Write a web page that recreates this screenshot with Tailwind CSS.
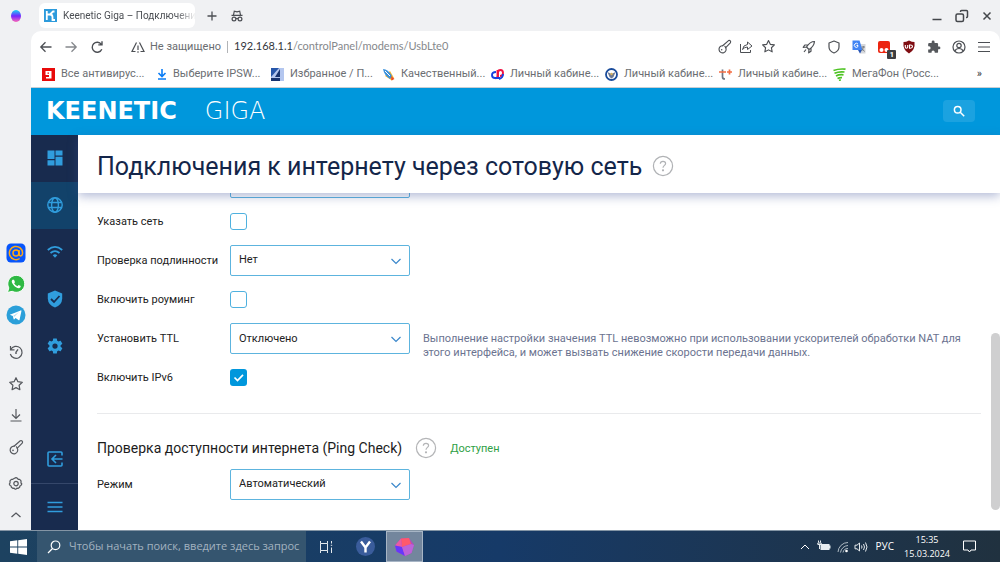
<!DOCTYPE html>
<html lang="ru">
<head>
<meta charset="utf-8">
<meta name="viewport" content="width=device-width, initial-scale=1">
<title>Keenetic Giga – Подключения к интернету через сотовую сеть</title>
<script src="https://cdn.jsdelivr.net/npm/@tailwindcss/browser@4"></script>
</head>
<body class="flex h-screen flex-col overflow-hidden bg-[#f0f1f3] font-['Roboto','Noto_Sans',sans-serif] text-[11px] text-[#222]">

<svg class="hidden" aria-hidden="true">
  <symbol id="key" viewBox="0 0 16 16" fill="none" stroke="currentColor" stroke-width="1.2" stroke-linejoin="round" stroke-linecap="round"><path d="M6 7.2 12.3 1.7Q13.4 1.2 14.2 2.1T14.2 4.2L9.3 9.2"/><path d="M6 7.2A3.8 3.8 0 1 0 9.3 9.2M9.3 9.2 8.4 7.8"/><circle cx="5" cy="11.4" r=".8" fill="currentColor" stroke="none"/></symbol>
  <symbol id="star" viewBox="0 0 16 16" fill="none" stroke="currentColor" stroke-width="1.2" stroke-linejoin="round"><path d="m8 1.7 1.9 4 4.4.6-3.2 3 .8 4.4L8 11.6l-3.9 2.1.8-4.4-3.2-3 4.4-.6z"/></symbol>
  <symbol id="chev" viewBox="0 0 12 12" fill="none" stroke="currentColor" stroke-width="1.2"><path d="m1.500 4 4.500 4.500L10.500 4"/></symbol>
  <symbol id="help" viewBox="0 0 22 22" fill="none" stroke="currentColor" stroke-width="1.2"><circle cx="11" cy="11" r="9.600"/><path d="M8.300 8.700Q8.400 6.300 11 6.300T13.600 8.500C13.600 10.300 11 10.500 11 12.800"/><circle cx="11" cy="15.300" r=".5" fill="currentColor"/></symbol>
</svg>

<div class="flex min-h-0 flex-1">
  <!-- Browser side rail -->
  <aside class="flex w-[31px] shrink-0 flex-col items-center pb-2 text-[#55585d]">
    <button class="mt-2 flex h-4 w-4 items-center justify-center" aria-label="Алиса">
      <svg class="h-3 w-3" viewBox="0 0 12 12"><defs><linearGradient id="al" x2="0" y2="1"><stop offset="0" stop-color="#16d8f4"/><stop offset=".5" stop-color="#7426ff"/><stop offset="1" stop-color="#fb6ab8"/></linearGradient></defs><ellipse cx="6" cy="6" rx="5" ry="6" fill="url(#al)"/></svg>
    </button>
    <div class="flex-1"></div>
    <button aria-label="Почта" class="h-5 w-5"><svg viewBox="0 0 20 20"><rect x=".5" y=".5" width="19" height="19" rx="4.500" fill="#0755fb"/><g fill="none" stroke="#ffa915" stroke-width="1.500"><circle cx="10" cy="10" r="3"/><path d="M13 7v4q.2 2 1.700 2t1.900-3A6.600 6.600 0 1 0 13.700 15.500"/></g></svg></button>
    <button aria-label="WhatsApp" class="mt-[11px] h-5 w-5"><svg viewBox="0 0 20 20"><path d="m1.500 18.500 1.300-4.600A8.500 8.500 0 1 1 6.200 17.300z" fill="#2fb944" stroke="#fff" stroke-width="1"/><path d="M6.500 5.800q-1.800 1.700.6 4.700 3 3.900 6 3.800 1.500-.3 1.700-2.200l-2.200-1.200-1.200 1.300q-2.200-.8-3.300-3l.9-1L8 5.800z" fill="#fff"/></svg></button>
    <button aria-label="Telegram" class="mt-[11px] h-5 w-5"><svg viewBox="0 0 20 20"><circle cx="10" cy="10" r="9.500" fill="#2b9fd9"/><path d="m3.800 9.700 10.900-4.300q.9-.2.700.8l-1.900 8.700q-.3.700-1.100.2l-2.800-2.100-1.500 1.500q-.4.300-.5-.4l-.8-3z" fill="#fff"/><path d="m7 11 6-4.100-4.600 4.900z" fill="#b5dcf1"/></svg></button>
    <button aria-label="История" class="mt-[19px] h-4 w-4"><svg viewBox="0 0 16 16" fill="none" stroke="currentColor" stroke-width="1.200"><path d="M2.500 2v3.800h4M2.700 5.600A6 6 0 1 1 2.300 10"/><path d="m10 5.300-2 2.900v1.800" stroke-width="1.400"/></svg></button>
    <button aria-label="Избранное" class="mt-4 h-4 w-4"><svg class="h-4 w-4"><use href="#star"/></svg></button>
    <button aria-label="Загрузки" class="mt-[15px] h-4 w-4"><svg viewBox="0 0 16 16" fill="none" stroke="currentColor" stroke-width="1.200"><path d="M8 2v9M4 7.500l4 4 4-4M2.500 14h11"/></svg></button>
    <button aria-label="Пароли" class="mt-4 h-4 w-4"><svg class="h-4 w-4"><use href="#key"/></svg></button>
    <button aria-label="Настройки браузера" class="mt-[21px] h-4 w-4"><svg viewBox="0 0 16 16" fill="none" stroke="currentColor" stroke-width="1.200" stroke-linejoin="round"><path d="m6.500 2.300 1.500-.7 1.500.7.700 1 1.300.1 1.300 1.100.3 1.400-.2 1 .9 1.100-.9 1.500-1 .5-.3 1.300-1.300 1-1.400-.1-.9.900H7l-.9-.9-1.400.1-1.300-1L3.100 10l-1-.5L1.300 8l.8-1.100-.2-1 .3-1.400 1.300-1.100 1.300-.1z"/><circle cx="8" cy="7.600" r="2.200"/></svg></button>
    <button aria-label="Свернуть" class="mt-4 h-[14px] w-4"><svg viewBox="0 0 16 14" fill="none" stroke="currentColor" stroke-width="1.300"><path d="m3.500 9 4.500-4 4.500 4"/></svg></button>
  </aside>

  <div class="flex min-w-0 flex-1 flex-col">
    <!-- Tabs -->
    <div class="flex h-[31px] shrink-0 items-center pl-2 text-[#4c4f54]">
      <a href="#" class="flex h-[25px] w-[156px] items-center gap-[6px] rounded-md bg-white px-[5px] text-[10px]">
        <svg class="h-[13px] w-[13px] shrink-0" viewBox="0 0 13 13"><path fill="#2d9bdc" d="M0 0h13v13H0z"/><path d="M2.800 2v9M10.500 2.500H9L6 5.500H3M6 5.500q2.500 0 2.500 2.500v3h2.500" fill="none" stroke="#fff" stroke-width="1.800"/></svg>
        <span class="whitespace-nowrap [mask-image:linear-gradient(to_right,black_85%,transparent)]">Keenetic Giga – Подключени</span>
      </a>
      <button aria-label="Новая вкладка" class="ml-[11px] h-3 w-3"><svg viewBox="0 0 12 12" stroke="currentColor" stroke-width="1.300"><path d="M6 1.500v9M1.500 6h9"/></svg></button>
      <button aria-label="Инкогнито" class="ml-[13px] h-3 w-3"><svg viewBox="0 0 12 12" fill="none" stroke="currentColor" stroke-width="1.200"><path d="M.5 5.300h11M2.500 5l.8-3.800 2.700.6 2.700-.6L9.500 5M4.800 8.700q1.200-.8 2.400 0"/><circle cx="3" cy="9" r="1.900"/><circle cx="9" cy="9" r="1.900"/></svg></button>
      <div class="flex-1"></div>
      <button aria-label="Свернуть окно" class="h-4 w-[25px]"><svg class="mx-auto h-3 w-3" viewBox="0 0 12 12" stroke="#44474b" stroke-width="1.500"><path d="M1.500 9.500h9"/></svg></button>
      <button aria-label="Восстановить окно" class="h-4 w-[25px]"><svg class="mx-auto h-3.5 w-3.5" viewBox="0 0 14 14" fill="none" stroke="#44474b" stroke-width="1.500"><rect x="1" y="5" width="7.500" height="7.500" rx="1.500"/><path d="M5.500 3V2.500q0-1 1-1h5q1 0 1 1v5q0 1-1 1H11"/></svg></button>
      <button aria-label="Закрыть окно" class="mr-px h-4 w-[25px]"><svg class="mx-auto h-3 w-3" viewBox="0 0 12 12" stroke="#44474b" stroke-width="1.500"><path d="m2.500 2.500 7 7m0-7-7 7"/></svg></button>
    </div>

    <!-- Address bar and bookmarks -->
    <div class="shrink-0 rounded-t-[10px] border-b border-[#c9ced3] bg-white">
      <div class="flex h-[31px] items-center pr-1 pl-2 text-[#4c4f54]">
        <button aria-label="Назад" class="h-3.5 w-3.5"><svg viewBox="0 0 14 14" fill="none" stroke="currentColor" stroke-width="1.300"><path d="M12.500 7H2M6.500 2.200 1.800 7l4.700 4.800"/></svg></button>
        <button aria-label="Вперёд" class="ml-[11px] h-3.5 w-3.5 text-[#85888c]"><svg viewBox="0 0 14 14" fill="none" stroke="currentColor" stroke-width="1.300"><path d="M1.500 7H12M7.500 2.200 12.200 7l-4.700 4.800"/></svg></button>
        <button aria-label="Обновить" class="ml-3 h-3.5 w-3.5"><svg viewBox="0 0 14 14" fill="none" stroke="currentColor" stroke-width="1.400"><path d="M11.800 9.200A5 5 0 1 1 11.300 4.300M12 1.200v3.700H8.300"/></svg></button>
        <button class="ml-[27px] flex items-center gap-[5px] text-[#6a6d71]"><svg class="h-3.5 w-3.5" viewBox="0 0 14 14" fill="none" stroke="#4c4f54" stroke-width="1.200"><path d="M5.500 2.500 1 11.500h3.500M8.500 2.500l4.500 9H9.500M7 5.500V10M7 1.500h.1M7 11.200v1.500"/></svg><span class="pt-px">Не защищено</span></button>
        <span class="mx-[6px] h-3 w-px bg-[#b2b4b7]"></span>
        <div role="textbox" contenteditable="true" aria-label="Адресная строка" class="min-w-0 flex-1 font-['Lato',sans-serif] whitespace-nowrap text-[#85888c] outline-none"><span class="text-[#33363b]">192.168.1.1</span>/controlPanel/modems/UsbLte0</div>
        <button aria-label="Пароль" class="w-[22px]"><svg class="mx-auto h-[15px] w-[15px]"><use href="#key"/></svg></button>
        <button aria-label="Поделиться" class="w-[22px]"><svg class="mx-auto h-3.5 w-3.5" viewBox="0 0 14 14" fill="none" stroke="currentColor"><path d="M1.500 4v8.500h10V10M3.500 9.500Q4 5 8.500 4.500V2L13 6 8.500 9.500V7Q5.500 7 3.500 9.500z" stroke-linejoin="round"/></svg></button>
        <button aria-label="В избранное" class="mr-[17px] w-[22px]"><svg class="mx-auto h-[15px] w-[15px]"><use href="#star"/></svg></button>
        <button aria-label="Турбо" class="w-[25px]"><svg class="mx-auto h-3.5 w-3.5" viewBox="0 0 14 14" fill="none" stroke="currentColor" stroke-width="1.200" stroke-linejoin="round"><path d="M12.500 1.500Q8 1.500 4.500 7l2.500 2.500q5-3 5.500-8zM5.500 5H2.800L1.200 7.300l3.300-.3M9 8.500v2.700l-2.300 1.600L7 9.500M4 9.500 2 12"/></svg></button>
        <button aria-label="Защита" class="w-[25px]"><svg class="mx-auto h-3.5 w-3.5" viewBox="0 0 14 14" fill="none" stroke="currentColor" stroke-width="1.200"><path d="M7 1 12 3v4q0 4-5 6-5-2-5-6V3z" stroke-linejoin="round"/></svg></button>
        <button aria-label="Переводчик" class="w-[25px]"><svg class="mx-auto h-3.5 w-3.5" viewBox="0 0 14 14"><path fill="#d6d8dc" d="M5 4h8.500v9.500H8z"/><path fill="#4285f4" d="M.5.500h7l3 9.500H.5z"/><path fill="#2856b8" d="M6 10h4l-2 3.500z"/><path d="M6 4.200A2 2 0 1 0 6 6.500V5.500H4.500" fill="none" stroke="#fff"/><path d="M9.500 7h3.500M11.300 6v1Q11 9.500 9.500 11M10 8.500l2.500 3" fill="none" stroke="#72767c" stroke-width=".9"/></svg></button>
        <button aria-label="Расширение, 1" class="relative h-5 w-[25px]"><svg class="mx-auto h-3 w-3" viewBox="0 0 12 12"><rect width="12" height="12" rx="2" fill="#ec2510"/><circle cx="3.500" cy="9" r="2" fill="#fff"/><circle cx="8.500" cy="9" r="2" fill="#fff"/></svg><span class="absolute right-0 bottom-[-2px] rounded-[1px] bg-[#3c3d40] px-[2px] text-[8px] leading-[9px] font-bold text-white">1</span></button>
        <button aria-label="uBlock Origin" class="w-[25px]"><svg class="mx-auto h-3.5 w-3.5" viewBox="0 0 14 14"><path d="M7 .5q3 1.500 5.500 1.500Q13.500 10 7 13.500.5 10 1.500 2 4 2 7 .5z" fill="#800d12"/><path d="M3.300 5v2q0 1.200 1.200 1.200T5.700 7V5" fill="none" stroke="#fff" stroke-width="1.100"/><path d="M7.500 5h1q2 0 2 1.600t-2 1.600h-1z" fill="none" stroke="#fff" stroke-width="1.100"/></svg></button>
        <button aria-label="Расширения" class="w-[25px]"><svg class="mx-auto h-3.5 w-3.5" viewBox="0 0 24 24" fill="#55585c"><path d="M20.500 11H19V7a2 2 0 0 0-2-2h-4V3.500a2.500 2.500 0 0 0-5 0V5H4a2 2 0 0 0-2 2v3.800h1.500a2.700 2.700 0 0 1 0 5.400H2V20a2 2 0 0 0 2 2h3.800v-1.500a2.700 2.700 0 0 1 5.400 0V22H17a2 2 0 0 0 2-2v-4h1.500a2.500 2.500 0 0 0 0-5z"/></svg></button>
        <button aria-label="Профиль" class="w-[25px]"><svg class="mx-auto h-3.5 w-3.5" viewBox="0 0 14 14" fill="none" stroke="currentColor" stroke-width="1.200"><circle cx="7" cy="7" r="6"/><circle cx="7" cy="5.500" r="2.200"/><path d="M3 11q1-2.500 4-2.500T11 11"/></svg></button>
        <button aria-label="Меню" class="w-[25px]"><svg class="mx-auto h-3.5 w-3.5" viewBox="0 0 14 14" stroke="currentColor" stroke-width="1.200"><path d="M1 2.500h12M1 7h12M1 11.500h12"/></svg></button>
      </div>
      <nav aria-label="Закладки" class="flex h-[25px] items-center pb-px pl-[11px] whitespace-nowrap text-[#6b6e72]">
        <a href="#" class="flex w-[114px] items-center gap-[6px]"><svg class="h-[13px] w-[13px] shrink-0" viewBox="0 0 13 13"><path fill="#e80a0a" d="M0 0h13v13H0z"/><path d="M3.500 3h6v7.500H4V9h3V7H3.500z" fill="#fff"/><path d="M5.500 4.500H7v1.200H5.500z" fill="#e80a0a"/></svg>Все антивирус...</a>
        <a href="#" class="flex w-[115px] items-center gap-[5px]"><svg class="h-3 w-3 shrink-0" viewBox="0 0 12 12" fill="none" stroke="#0a7cf5" stroke-width="1.600"><path d="M6 1v7M2.500 5 6 8.500 9.500 5M2 11h8"/></svg>Выберите IPSW...</a>
        <a href="#" class="flex w-[111px] items-center gap-[6px]"><svg class="h-[13px] w-[13px] shrink-0" viewBox="0 0 13 13"><path fill="#b3c6ef" d="M0 0h13v13H0z"/><path fill="#2757aa" d="M0 0h8L0 9z"/><path fill="#17336f" d="M0 10h9v3H0zM9 1v8H4z"/></svg>Избранное / П...</a>
        <a href="#" class="flex w-[109px] items-center gap-[6px]"><svg class="h-[13px] w-[13px] shrink-0" viewBox="0 0 13 13"><path d="m3 8 5-5 4 7-2 2.500z" fill="#f5b62a"/><path d="M1 1q5 0 9 7l-2 3Q2 7 1 1z" fill="#3a91db"/><path d="m3 3 5 5" stroke="#fff"/><path d="m9 8 3.500 3-3 1.500z" fill="#e94a2b"/></svg>Качественный...</a>
        <a href="#" class="flex w-[114px] items-center gap-[6px]"><svg class="h-[13px] w-[13px] shrink-0" viewBox="0 0 13 13" fill="none" stroke-width="1.900"><path d="M7 10.500V4.500Q7 2 9.500 2T12 5 9 8" stroke="#f01243"/><path d="M6.500 2v6Q6.500 10 4.500 10.500" stroke="#f01243"/><path d="M5 4Q1 4 1 7t3 3H9" stroke="#1740df"/><path d="M8 11q4-1 4-5" stroke="#1740df"/></svg>Личный кабине...</a>
        <a href="#" class="flex w-[114px] items-center gap-[6px]"><svg class="h-[13px] w-[13px] shrink-0" viewBox="0 0 13 13"><circle cx="6.500" cy="6.500" r="5.500" fill="#fff" stroke="#194b9b" stroke-width="1.800"/><path d="m2.500 4 4 2 4-2-2 5-2 1.500L4.500 9z" fill="#6c7893"/><circle cx="6.500" cy="6" r="1.200" fill="#dab35d"/></svg>Личный кабине...</a>
        <a href="#" class="flex w-[114px] items-center gap-[6px]"><svg class="h-[13px] w-[13px] shrink-0" viewBox="0 0 13 13" fill="none" stroke-width="1.700"><path d="M3.500 1.500V9q0 2 2.500 2" stroke="#6d7683"/><path d="M0 4h7M8 4h5M10.500 1.500v5" stroke="#f36c42"/></svg>Личный кабине...</a>
        <a href="#" class="flex items-center gap-[6px]"><svg class="h-[13px] w-[13px] shrink-0" viewBox="0 0 13 13" fill="none" stroke="#4dc322" stroke-width="1.700"><path d="M.5 2.500Q6 .5 12.500 1.200M1.500 5.300Q6 3.300 11.500 4M3 8Q6 6.300 10.500 6.800M4.500 10.500Q7 9.300 9 9.600M6 12.500l1.800-.7"/></svg>МегаФон (Росс...</a>
        <button aria-label="Другие закладки" class="mr-[18px] ml-auto text-[#33363b]">»</button>
      </nav>
    </div>

    <!-- Router header -->
    <header class="flex h-[47px] shrink-0 items-center justify-between bg-[#0097dc] pr-[25px] pb-[2px] pl-[15px] text-white">
      <a href="#" class="flex items-baseline gap-7 font-['DejaVu_Sans',sans-serif] text-[24px] leading-6"><span class="font-bold">KEENETIC</span><span class="font-extralight">GIGA</span></a>
      <button aria-label="Поиск" class="flex h-[22px] w-8 items-center justify-center rounded-sm bg-[#1ba2e0]"><svg class="h-3 w-3" viewBox="0 0 12 12" fill="none" stroke="currentColor" stroke-width="1.500"><circle cx="4.700" cy="4.700" r="3.300"/><path d="m7.200 7.200 4 4"/></svg></button>
    </header>

    <div class="flex min-h-0 flex-1">
      <!-- Router navigation -->
      <nav aria-label="Главное меню" class="flex w-[47px] shrink-0 flex-col bg-[#182b4e] text-[#309ddd]">
        <a href="#" aria-label="Системный монитор" class="flex h-[47px] items-center justify-center pb-[2px]"><svg class="h-4 w-4" viewBox="0 0 16 16" fill="currentColor"><path d="M.5.500h7v8.500h-7zM8.500.500h7v5h-7zM.5 10.200h7v5.300h-7zM8.500 6.800h7v8.700h-7z"/></svg></a>
        <a href="#" aria-label="Интернет" class="flex h-[47px] items-center justify-center bg-[#12426a] pb-[2px]"><svg class="h-4 w-4" viewBox="0 0 16 16" fill="none" stroke="currentColor" stroke-width="1.400"><circle cx="8" cy="8" r="7.200"/><ellipse cx="8" cy="8" rx="3.400" ry="7.200"/><path d="M1.500 5.500h13M1.500 10.500h13"/></svg></a>
        <a href="#" aria-label="Мои сети и Wi-Fi" class="flex h-[47px] items-center justify-center pb-[2px]"><svg class="h-4 w-4" viewBox="0 0 16 16" fill="none" stroke="currentColor" stroke-width="1.800"><path d="M.8 6Q8-.2 15.200 6M3.500 9Q8 5.200 12.500 9"/><path d="M5.700 11.200Q8 9.200 10.300 11.200L8 13.700z" fill="currentColor" stroke="none"/></svg></a>
        <a href="#" aria-label="Сетевые правила" class="flex h-[47px] items-center justify-center pb-[2px]"><svg class="h-[18px] w-4" viewBox="0 0 16 18"><path d="M8 .5 15.200 3.500v5Q15 15 8 17.500 1 15 .8 8.500v-5z" fill="currentColor"/><path d="m4 9 3 3 5.500-6" fill="none" stroke="#182b4e" stroke-width="1.800"/></svg></a>
        <a href="#" aria-label="Управление" class="flex h-[47px] items-center justify-center pb-[2px]"><svg class="h-[18px] w-[18px]" viewBox="0 0 24 24" fill="currentColor"><path d="M19.430 12.980c.04-.32.070-.64.070-.98s-.030-.66-.070-.98l2.110-1.650c.19-.15.240-.42.120-.64l-2-3.460c-.12-.22-.39-.3-.61-.22l-2.490 1c-.52-.4-1.080-.73-1.690-.98l-.38-2.650A.49.490 0 0 0 14 2h-4c-.25 0-.46.180-.49.420l-.38 2.650c-.61.250-1.170.590-1.690.980l-2.490-1c-.23-.090-.49 0-.61.220l-2 3.460c-.13.220-.07.490.12.640l2.110 1.650c-.04.320-.07.650-.07.980s.03.660.07.980l-2.110 1.650c-.19.150-.24.420-.12.640l2 3.460c.12.220.39.300.61.220l2.490-1c.52.400 1.080.730 1.690.980l.38 2.650c.03.240.24.420.49.420h4c.25 0 .46-.18.49-.42l.38-2.650c.61-.25 1.170-.59 1.690-.98l2.490 1c.23.090.49 0 .61-.22l2-3.460c.12-.22.070-.49-.12-.64zM12 15.500a3.500 3.500 0 1 1 0-7 3.500 3.500 0 0 1 0 7z"/></svg></a>
        <div class="flex-1"></div>
        <button aria-label="Выход" class="flex h-[47px] shrink-0 items-center justify-center pb-[2px]"><svg class="h-4 w-4" viewBox="0 0 16 16" fill="none" stroke="currentColor" stroke-width="1.600"><path d="M15 4.500V2q0-1-1-1H2Q1 1 1 2v12q0 1 1 1h12q1 0 1-1v-2.500M15.500 8H5.500M9 4 5 8l4 4"/></svg></button>
        <button aria-label="Свернуть меню" class="flex h-[47px] shrink-0 items-center justify-center border-t border-[#35476a]"><svg class="h-4 w-4" viewBox="0 0 16 16" stroke="currentColor" stroke-width="1.300"><path d="M.5 3.500h15M.5 8h15M.5 12.500h15"/></svg></button>
      </nav>

      <main class="relative flex min-w-0 flex-1 flex-col bg-white">
        <div class="z-10 flex h-[58px] shrink-0 items-center gap-[10px] bg-white pt-1 pl-[19px] shadow-[0_3px_10px_rgba(60,80,150,0.4)]">
          <h1 class="pt-[2px] text-[25px] leading-8 whitespace-nowrap text-[#14264a]">Подключения к интернету через сотовую сеть</h1>
          <button aria-label="Справка" class="text-[#b0b2b5]"><svg class="h-[22px] w-[22px]"><use href="#help"/></svg></button>
        </div>
        <div class="min-h-0 flex-1 overflow-hidden px-[19px]">
          <form class="-mt-[30px]">
            <div class="flex h-[39px] items-center"><span class="w-[133px] shrink-0"></span><select aria-label="Сеть" class="h-[31px] w-[180px] appearance-none rounded-[2px] border border-[#5db4de] bg-white px-2"><option></option></select></div>
            <div class="flex h-[39px] items-center"><label for="net" class="w-[133px] shrink-0 pt-[2px]">Указать сеть</label><input id="net" type="checkbox" class="h-[17px] w-[17px] appearance-none rounded-[3px] border border-[#4fb1df] bg-white"></div>
            <div class="flex h-[39px] items-center"><label for="auth" class="w-[133px] shrink-0 pt-[2px]">Проверка подлинности</label><div class="relative"><select id="auth" class="block h-[31px] w-[180px] appearance-none rounded-[2px] border border-[#5db4de] bg-white px-2"><option>Нет</option></select><svg class="pointer-events-none absolute top-[10px] right-2 h-3 w-3 text-[#3a87cb]"><use href="#chev"/></svg></div></div>
            <div class="flex h-[39px] items-center"><label for="roam" class="w-[133px] shrink-0 pt-[2px]">Включить роуминг</label><input id="roam" type="checkbox" class="h-[17px] w-[17px] appearance-none rounded-[3px] border border-[#4fb1df] bg-white"></div>
            <div class="flex h-[39px] items-center"><label for="ttl" class="w-[133px] shrink-0 pt-[2px]">Установить TTL</label><div class="relative"><select id="ttl" class="block h-[31px] w-[180px] appearance-none rounded-[2px] border border-[#5db4de] bg-white px-2 pt-[2px]"><option>Отключено</option></select><svg class="pointer-events-none absolute top-[10px] right-2 h-3 w-3 text-[#3a87cb]"><use href="#chev"/></svg></div><p class="mt-[14px] ml-[13px] flex-1 leading-[14px] text-[#6b7390]">Выполнение настройки значения TTL невозможно при использовании ускорителей обработки NAT для этого интерфейса, и может вызвать снижение скорости передачи данных.</p></div>
            <div class="flex h-[39px] items-center"><label for="ip6" class="w-[133px] shrink-0 pt-[2px]">Включить IPv6</label><span class="relative h-[17px] w-[17px]"><input id="ip6" type="checkbox" checked class="block h-[17px] w-[17px] appearance-none rounded-[3px] bg-[#0097dc]"><svg class="pointer-events-none absolute inset-0" viewBox="0 0 17 17" fill="none" stroke="#fff" stroke-width="1.700"><path d="m4.500 8.500 3 3L13 5.800"/></svg></span></div>
            <hr class="mt-4 border-[#e9eaec]">
            <div class="mt-[19px] flex h-[30px] items-center gap-[13px]"><h2 class="text-[14px] text-[#1c1c1c]">Проверка доступности интернета (Ping Check)</h2><button type="button" aria-label="Справка" class="text-[#b4b5b7]"><svg class="h-[22px] w-[22px]"><use href="#help"/></svg></button><span class="pt-[2px] text-[#2f9f45]">Доступен</span></div>
            <div class="mt-[2px] flex h-[39px] items-center"><label for="mode" class="w-[133px] shrink-0 pt-[2px]">Режим</label><div class="relative"><select id="mode" class="block h-[31px] w-[180px] appearance-none rounded-[2px] border border-[#5db4de] bg-white px-2"><option>Автоматический</option></select><svg class="pointer-events-none absolute top-[10px] right-2 h-3 w-3 text-[#3a87cb]"><use href="#chev"/></svg></div></div>
          </form>
        </div>
        <div class="absolute top-1/2 right-0 h-[177px] w-[9px] rounded-full bg-[#cfcfd0]"></div>
      </main>
    </div>
  </div>
</div>

<!-- Taskbar -->
<footer class="flex h-8 shrink-0 items-center border-t border-[#8495a5] bg-linear-to-r from-[#1d4260] via-[#163a68] to-[#20313f] font-['Open_Sans','Noto_Sans',sans-serif] text-white">
  <button aria-label="Пуск" class="flex h-full w-[37px] items-center justify-center"><svg class="h-4 w-[17px]" viewBox="0 0 17 16" fill="#fff"><path d="m0 2.300 7.300-1V7.600H0zM8.200 1.200 17 0v7.600H8.200zM0 8.400h7.300v6.300L0 13.700zM8.200 8.400H17V16l-8.800-1.200z"/></svg></button>
  <label class="flex h-full w-[269px] items-center gap-2 bg-[#35556f] pl-[10px]"><svg class="h-3.5 w-3.5 shrink-0" viewBox="0 0 14 14" fill="none" stroke="#fff" stroke-width="1.200"><circle cx="8.500" cy="5.300" r="4.300"/><path d="M5.500 8.500 1 13"/></svg><input aria-label="Поиск" placeholder="Чтобы начать поиск, введите здесь запрос" class="min-w-0 flex-1 bg-transparent text-[11px] outline-none placeholder:text-[#a3b3c0]"></label>
  <button aria-label="Представление задач" class="flex h-full w-[39px] items-center justify-center"><svg class="h-3.5 w-3.5" viewBox="0 0 14 14" fill="none" stroke="#e2e8ed"><path d="M1.500 1v2.500h7V1M1.500 13v-2.500h7V13M1.500 3.500v7M8.500 3.500v7M12.500 1v2.500M12.500 7.500V13M11.800 5.300h1.400"/></svg></button>
  <button aria-label="Яндекс Браузер" class="flex h-full w-[41px] items-center justify-center"><svg class="h-[19px] w-[19px]" viewBox="0 0 19 19"><circle cx="9.500" cy="9.500" r="9.500" fill="#3a5c9b"/><path d="m5 4.500 4.500 6 4.500-6M9.500 10v5.500" fill="none" stroke="#fff" stroke-width="2.400"/></svg></button>
  <button aria-label="Браузер" class="flex h-full w-[37px] items-center justify-center border border-[#a7b5c5] bg-[#73869d]"><svg class="h-[19px] w-[19px]" viewBox="0 0 19 19"><path d="M6 1.500 14 1l5 7-2.500 8-6.500 3-8.500-4.500L0 8.500z" fill="#b947bd"/><path d="m6 1.500 8-.5 2 6-9 3z" fill="#ff596c"/><path d="m6 1.500 1 8.500-7-1.500z" fill="#e75ba5"/><path d="m0 8.500 7 1.500 3 9-8.500-4.500z" fill="#6538fb"/><path d="m16 7 3 1-2.500 8-6.500 3L7 10z" fill="#bc63d8"/></svg></button>
  <div class="flex-1"></div>
  <button aria-label="Показать скрытые значки" class="w-3"><svg viewBox="0 0 12 12" fill="none" stroke="#fff"><path d="m2 8 4-4 4 4"/></svg></button>
  <svg class="ml-[6px] h-[13px] w-[14px]" viewBox="0 0 14 13"><path d="M3.500 4H12.500v1.500h1v3h-1V10H3.500z" fill="#e8edf0"/><path d="M1.500.5v2M3.500.5v2M.8 3h3.400v1.500H.8zM2.500 5v4" stroke="#e8edf0" fill="none"/></svg>
  <svg class="ml-[6px] h-3 w-3" viewBox="0 0 12 12" fill="none" stroke="#aebac3"><path d="M1 11A10 10 0 0 1 11 1.500M3.500 11.500A8 8 0 0 1 11 4.500M6 11.500a5 5 0 0 1 5-4"/><circle cx="9.500" cy="10" r="1.300" fill="#fff" stroke="none"/></svg>
  <svg class="ml-[5px] h-3 w-[14px]" viewBox="0 0 14 12" fill="none" stroke="#e4e9ed"><path d="M1 4.200h2L5.500 2v8L3 7.800H1zM7.500 4.500q1 1.500 0 3M9.500 3q2 3 0 6M11.500 1.500q3 4.500 0 9"/></svg>
  <button class="ml-2 text-[10px]">РУС</button>
  <time class="ml-[10px] flex flex-col items-center text-[9px] leading-[14px] whitespace-nowrap"><span>15:35</span><span>15.03.2024</span></time>
  <button aria-label="Уведомления" class="mr-[24px] ml-[13px] h-[13px] w-[13px]"><svg viewBox="0 0 13 13" fill="none" stroke="#fff"><path d="M.5 1h12v9h-4.500L6.500 12 5 10H.5z"/></svg></button>
</footer>
</body>
</html>
